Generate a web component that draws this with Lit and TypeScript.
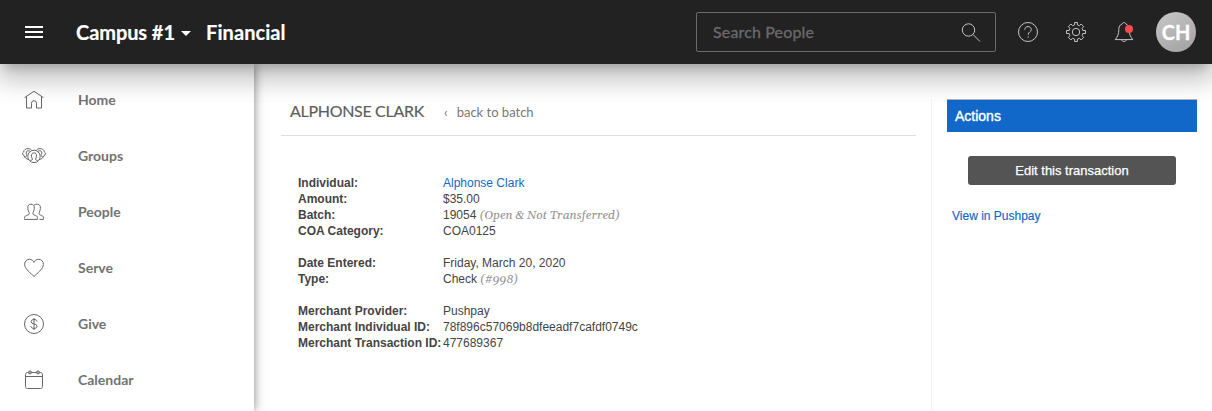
import { LitElement, html, css, svg } from 'lit';
import { customElement } from 'lit/decorators.js';

const icons = {
  home: svg`<path d="M.6 7.6 10 1.3l9.4 6.3M2.500 6.500v11.500h5v-4.800a2.500 2.500 0 0 1 5 0v4.800h5V6.500"/>`,
  groups: svg`<path d="M5 13.500C2.500 13.300.6 11.800 0 9.400C-1.900 9.200-1.900 6.500-.5 6.200C0 3.600 2 2.600 4 2.600C5.800 2.600 7.200 3.400 7.900 4.600M15 13.500C17.500 13.300 19.400 11.800 20 9.400C21.900 9.200 21.900 6.500 20.500 6.200C20 3.600 18 2.600 16 2.600C14.200 2.600 12.800 3.400 12.100 4.600M1.300 10.800C2.700 10.600 3 9.800 2.500 8.500C1.800 6.500 2.400 4.700 4.200 4.700C5.200 4.700 6 5.200 6.300 5.700M18.700 10.800C17.300 10.600 17 9.800 17.500 8.500C18.200 6.500 17.600 4.700 15.800 4.700C14.800 4.700 14 5.200 13.700 5.700"/><circle cx="10" cy="10.400" r="6.200"/><path d="M6.300 14.400C8.500 14.300 8.800 13.500 8 12C6.800 9.700 7.500 6.800 10 6.800s3.200 2.900 2 5.200c-.8 1.500-.5 2.300 1.700 2.400"/>`,
  people: svg`<path d="M7 2.200C4.500 2.200 3.600 4 3.800 6.300c.1 2.300 1.200 3.500 1.500 5.200.2 1.300-2.500 1.800-3.900 2.500C.5 14.500.5 16 .5 17.400h13c0-1.400 0-2.900-.9-3.400-1.400-.7-4-1.200-3.800-2.500.3-1.700 1.400-2.900 1.500-5.200C10.500 4 9.500 2.200 7 2.200zM10 3.200C11 2.400 12 2.200 13.200 2.200c2.500 0 3.400 1.800 3.200 4.100-.1 2.300-1.200 3.500-1.300 5.200-.2 1.300 2 1.800 3.500 2.500.9.500.9 1.900.9 3.400h-4"/>`,
  serve: svg`<path d="M10 18.400C7 15.500.6 11 .6 6.400.6 3.200 2.700 1.300 5.300 1.300 7.600 1.300 9.200 2.500 10 4.300 10.800 2.500 12.400 1.300 14.700 1.300c2.600 0 4.700 1.900 4.700 5.100C19.400 11 13 15.500 10 18.400z"/>`,
  give: svg`<circle cx="10" cy="10" r="9.500"/><path d="M13 7.500C12.800 6 11.700 5.500 10 5.500c-1.700 0-2.900.8-2.900 2.200C7.100 11 13 9 13 12.200c0 1.500-1.300 2.200-3 2.200s-3-.8-3.200-2.300M10 4v12"/>`,
  calendar: svg`<path d="M4.500 2.500H3.500c-1.200 0-2 .8-2 2v12c0 1.200.8 2 2 2h13c1.200 0 2-.8 2-2v-12c0-1.200-.8-2-2-2h-1M7.500 2.500h5M1.500 6.500h17"/><circle cx="6" cy="2.400" r="1.500" fill="#aaa"/><circle cx="14" cy="2.400" r="1.500" fill="#aaa"/>`,
  search: svg`<circle cx="7.500" cy="8" r="6.200"/><path d="m12 12.500 7 7"/>`,
  help: svg`<circle cx="10" cy="10" r="9.500"/><path d="M6.800 7.700C6.800 5.600 8.200 4.600 10 4.600s3.300 1 3.300 2.900c0 2.400-3.100 2.300-3.100 5.300M10.200 14.300v1.400"/>`,
  gear: svg`<circle cx="10" cy="10" r="3.700"/><path d="M8.600.5h2.800v2.400l2 .8 1.700-1.700 2.500 2.500-1.500 2 .7 2h2.700v3h-2.700l-.7 2 1.500 2-2.500 2.400-1.700-1.600-2 .8v2.400H8.600v-2.400l-2-.8-1.700 1.600L2.400 15.500l1.500-2-.7-2H.5v-3h2.700l.7-2-1.500-2L4.900 2l1.700 1.700 2-.8z"/>`,
  bell: svg`<path d="M8.300 1.900C8.300 1 9 .6 10 .6s1.700.4 1.700 1.300c2.500.8 3.500 3 3.500 5.500 0 4.800 1 7 3.600 10.200H1.200C3.800 14.400 4.800 12.200 4.800 7.400 4.800 4.900 5.800 2.700 8.300 1.900zM7.700 17.700C8 19 8.700 19.500 10 19.500s2-.5 2.300-1.800"/>`,
};
type IconName = keyof typeof icons;

const nav: [IconName, string][] = [
  ['home', 'Home'],
  ['groups', 'Groups'],
  ['people', 'People'],
  ['serve', 'Serve'],
  ['give', 'Give'],
  ['calendar', 'Calendar'],
];

interface Row { label: string; value: string; link?: boolean; note?: string }

const groups: Row[][] = [
  [
    { label: 'Individual:', value: 'Alphonse Clark', link: true },
    { label: 'Amount:', value: '$35.00' },
    { label: 'Batch:', value: '19054', note: '(Open & Not Transferred)' },
    { label: 'COA Category:', value: 'COA0125' },
  ],
  [
    { label: 'Date Entered:', value: 'Friday, March 20, 2020' },
    { label: 'Type:', value: 'Check', note: '(#998)' },
  ],
  [
    { label: 'Merchant Provider:', value: 'Pushpay' },
    { label: 'Merchant Individual ID:', value: '78f896c57069b8dfeeadf7cafdf0749c' },
    { label: 'Merchant Transaction ID:', value: '477689367' },
  ],
];

const icon = (name: IconName) => html`<svg class="icon" viewBox="0 0 20 20">${icons[name]}</svg>`;

@customElement('app-root')
export class AppRoot extends LitElement {
  static styles = css`
    :host { display: flex; flex-direction: column; height: 411px; overflow: hidden; background: #fff;
      font: 12px/16px "Liberation Sans", Arial, sans-serif; color: #444; }
    * { box-sizing: border-box; }
    a { color: #0f68c9; text-decoration: none; }
    .icon { width: 20px; height: 20px; fill: none; stroke: currentColor; stroke-width: 1; overflow: visible; flex: none; display: block; }
    .top { position: relative; z-index: 2; height: 64px; flex: none; display: flex; align-items: center; background: #222;
      color: #fff; padding: 0 16px 0 25px; font-family: Lato, sans-serif;
      box-shadow: 0 8px 10px -5px rgba(0,0,0,.2), 0 16px 24px 2px rgba(0,0,0,.14), 0 6px 30px 5px rgba(0,0,0,.12); }
    .burger { width: 18px; height: 12px; border: solid #fff; border-width: 2px 0; display: flex; align-items: center; }
    .burger::before { content: ""; height: 2px; width: 100%; background: #fff; }
    .title { font-size: 20px; line-height: 24px; font-weight: 700; white-space: nowrap; -webkit-text-stroke: .2px #fff; }
    .campus { margin-left: 33px; width: 98px; letter-spacing: -.08px; }
    .financial { letter-spacing: .08px; }
    .caret { margin: 3px 15px 0 7px; border: 5px solid transparent; border-top-color: #fff; border-bottom: 0; }
    .search { margin-left: auto; width: 300px; height: 40px; border: 1px solid #6b6b6b; border-radius: 2px; display: flex; align-items: center;
      justify-content: space-between; padding: 0 14px 0 16px; color: #6b6b6b; font-size: 16px; }
    .placeholder { letter-spacing: .15px; -webkit-text-stroke: .3px #6b6b6b; }
    .search .icon, .tool .icon { color: #c4c4c4; }
    .tools { display: flex; gap: 28px; margin: 0 22px; }
    .tool { position: relative; }
    .dot { position: absolute; width: 8px; height: 8px; border-radius: 50%; background: #fb4b4e; left: 11px; top: 3px; }
    .avatar { width: 40px; height: 40px; border-radius: 50%; background: linear-gradient(150deg, #c8c8c8, #a0a0a0); font-size: 20px;
      font-weight: 700; display: flex; align-items: center; justify-content: center; -webkit-text-stroke: .3px #fff; }
    .body { flex: 1; display: flex; min-height: 0; }
    .nav { position: relative; z-index: 1; width: 254px; flex: none; padding-top: 8px; background: #fff; box-shadow: 0 0 10px rgba(0,0,0,.5);
      color: #727272; font: 700 14px/20px Lato, sans-serif; }
    .item { display: flex; align-items: center; height: 56px; padding-left: 24px; gap: 34px; }
    .item .icon { color: #666; }
    .main { width: 635px; margin: 29px 0 0 27px; flex: none; }
    .head { height: 43px; border-bottom: 1px solid #ddd; display: flex; align-items: baseline; padding: 8px 0 0 9px;
      font-family: Lato, sans-serif; white-space: nowrap; }
    .name { font-size: 16px; line-height: 20px; color: #5c5c5c; width: 135px; letter-spacing: -.31px; -webkit-text-stroke: .15px; }
    .back { font-size: 13px; color: #777; margin-left: 19px; display: flex; gap: 9px; }
    .details { padding: 39px 0 0 17px; }
    .group { margin-bottom: 16px; }
    .row { display: grid; grid-template-columns: 145px 1fr; white-space: nowrap; height: 16px; }
    .label { font-weight: 700; }
    .note { font: italic 12px/16px Gelasio, "Liberation Serif", serif; color: #929292; }
    .side { width: 281px; margin: 35px 0 0 15px; flex: none; border-left: 1px solid #f2f2f2; padding: 0 15px; }
    .actions { height: 33px; border-top: 1px solid #b5b5b5; background: #1168c9; color: #fff; font: 14px/32px "Liberation Sans", Arial, sans-serif;
      padding-left: 8px; -webkit-text-stroke: .35px #fff; }
    .edit { display: block; width: 208px; height: 29px; margin: 24px 0 0 21px; padding: 0; border: 0; border-radius: 3px; background: #545454; color: #fff;
      font: 13px/29px "Liberation Sans", Arial, sans-serif; -webkit-text-stroke: .25px #fff; }
    .view { display: block; margin: 23px 0 0 5px; -webkit-text-stroke: .15px; }
  `;

  render() {
    return html`
      <header class="top">
        <div class="burger"></div>
        <div class="title campus">Campus #1</div>
        <div class="caret"></div>
        <div class="title financial">Financial</div>
        <div class="search"><span class="placeholder">Search People</span>${icon('search')}</div>
        <div class="tools">
          <div class="tool">${icon('help')}</div>
          <div class="tool">${icon('gear')}</div>
          <div class="tool">${icon('bell')}<span class="dot"></span></div>
        </div>
        <div class="avatar">CH</div>
      </header>
      <div class="body">
        <nav class="nav">
          ${nav.map(([name, label]) => html`<div class="item">${icon(name)}<span>${label}</span></div>`)}
        </nav>
        <main class="main">
          <div class="head"><span class="name">ALPHONSE CLARK</span><span class="back"><span>‹</span><span>back to batch</span></span></div>
          <div class="details">
            ${groups.map(rows => html`<div class="group">${rows.map(r => html`
              <div class="row"><span class="label">${r.label}</span><span>${r.link ? html`<a>${r.value}</a>` : r.value}${r.note ? html` <span class="note">${r.note}</span>` : ''}</span></div>`)}</div>`)}
          </div>
        </main>
        <aside class="side">
          <div class="actions">Actions</div>
          <button class="edit">Edit this transaction</button>
          <a class="view">View in Pushpay</a>
        </aside>
      </div>`;
  }
}
